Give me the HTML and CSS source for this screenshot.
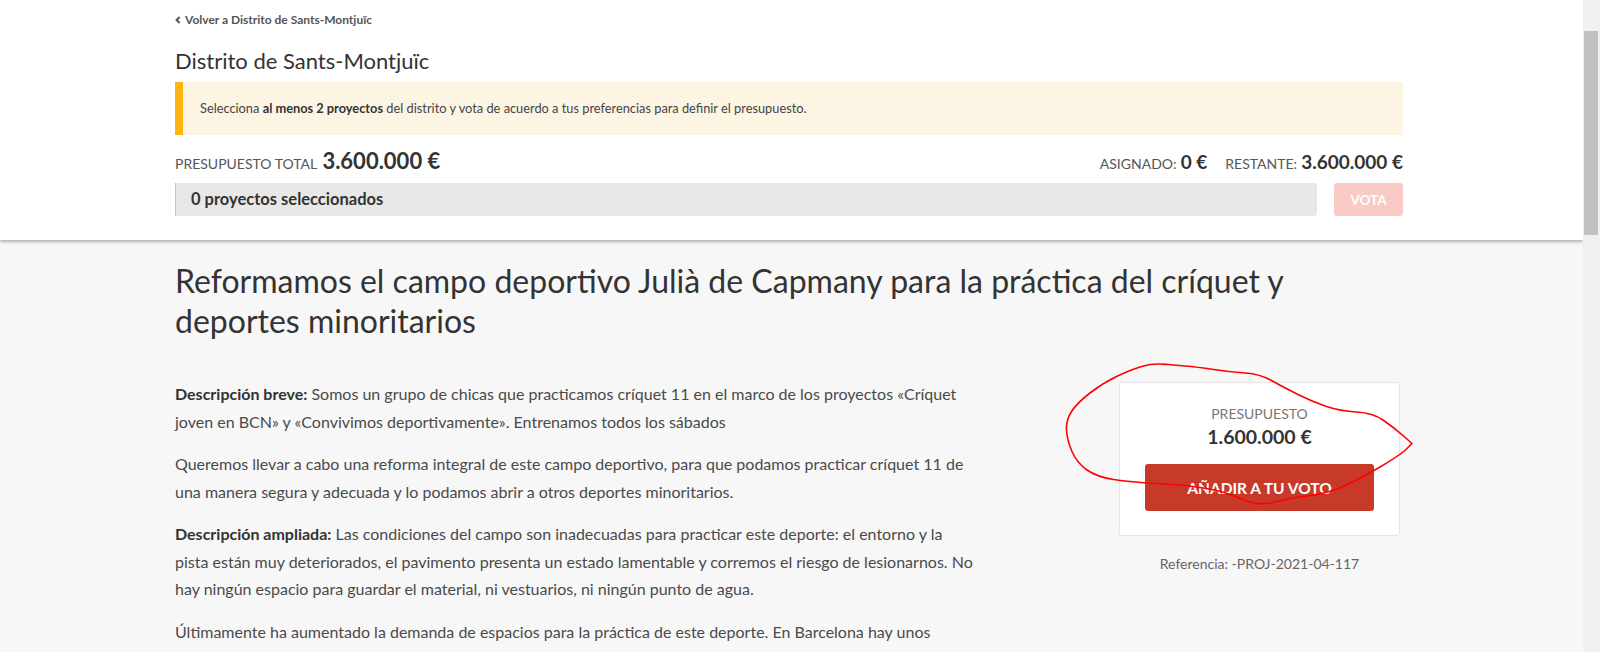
FILE: index.html
```html
<!DOCTYPE html>
<html lang="es">
<head>
    <meta charset="UTF-8">
    <meta name="viewport" content="width=device-width, initial-scale=1.0">
    <title>Reformamos el campo deportivo Julià de Capmany</title>
    <link rel="stylesheet" href="styles.css">
</head>
<body>

<div class="viewport">
    <div class="page">

        <!-- Budget header: district, instructions and vote summary -->
        <header class="budget-header">
            <div class="wrap">
                <a class="back-link" href="#">
                    <svg width="6" height="8" viewBox="0 0 6 8"><polyline points="4.6,1 1.6,4 4.6,7" fill="none" stroke="currentColor" stroke-width="2"/></svg>
                    Volver a Distrito de Sants-Montjuïc
                </a>
                <h2 class="district-title">Distrito de Sants-Montjuïc</h2>
                <div class="callout">
                    Selecciona <strong>al menos 2 proyectos</strong> del distrito y vota de acuerdo a tus preferencias para definir el presupuesto.
                </div>
                <div class="budget-summary">
                    <div class="budget-total">
                        <span class="label">Presupuesto total</span>
                        <strong class="amount-lg">3.600.000 €</strong>
                    </div>
                    <div class="budget-status">
                        <span><span class="label">Asignado:</span> <strong>0 €</strong></span>
                        <span><span class="label">Restante:</span> <strong>3.600.000 €</strong></span>
                    </div>
                </div>
                <div class="progress-row">
                    <div class="progress-bar">0 proyectos seleccionados</div>
                    <button class="vote-btn" disabled>Vota</button>
                </div>
            </div>
        </header>

        <!-- Project detail -->
        <main class="wrap project">
            <h1 class="project-title">Reformamos el campo deportivo Julià de Capmany para la práctica del críquet y<br>deportes minoritarios</h1>

            <div class="project-body">
                <div class="project-text">
                    <p><strong>Descripción breve:</strong> Somos un grupo de chicas que practicamos críquet 11 en el marco de los proyectos «Críquet<br>joven en BCN» y «Convivimos deportivamente». Entrenamos todos los sábados</p>
                    <p>Queremos llevar a cabo una reforma integral de este campo deportivo, para que podamos practicar críquet 11 de<br>una manera segura y adecuada y lo podamos abrir a otros deportes minoritarios.</p>
                    <p><strong>Descripción ampliada:</strong> Las condiciones del campo son inadecuadas para practicar este deporte: el entorno y la<br>pista están muy deteriorados, el pavimento presenta un estado lamentable y corremos el riesgo de lesionarnos. No<br>hay ningún espacio para guardar el material, ni vestuarios, ni ningún punto de agua.</p>
                    <p>Últimamente ha aumentado la demanda de espacios para la práctica de este deporte. En Barcelona hay unos</p>
                </div>

                <aside class="project-side">
                    <div class="budget-card">
                        <div class="card-label">Presupuesto</div>
                        <div class="card-amount">1.600.000 €</div>
                        <button class="add-btn">Añadir a tu voto</button>
                    </div>
                    <p class="reference">Referencia: -PROJ-2021-04-117</p>
                </aside>
            </div>
        </main>

        <!-- hand-drawn marker around the budget card -->
        <svg class="scribble" width="370" height="160" viewBox="0 0 370 160">
            <path fill="none" stroke="#f00" stroke-width="1.6" stroke-linejoin="round" stroke-linecap="round"
                d="M108,9 Q118,10 130,11 Q142,12 158.5,14.5 Q175,17 190,18 Q205,19 216.5,25.5 Q228,32 243,39.5 Q258,47 271.5,51.5 Q285,56 301.5,57 Q318,58 328,65 Q338,72 348,80.5 L357,88.5 L350,95.5 Q342,102 325,112 Q308,122 291.5,130 Q275,138 255,140.5 Q235,143 220,147 Q205,151 193.5,146.5 Q182,142 172,138.5 Q162,135 145,132.5 Q128,130 101.5,128.5 Q75,127 58.5,124.5 Q42,122 32,115 Q22,108 17,96.5 Q12,85 11.5,75 Q11,65 16.5,56.5 Q22,48 35,38 Q48,28 61.5,21.5 Q75,15 86.5,11.5 Q98,8 112,9.5"/>
        </svg>
    </div>

    <div class="scrollbar"><div class="scrollbar-thumb"></div></div>
</div>

</body>
</html>
```

FILE: styles.css
```css
html, body {
    margin: 0;
    padding: 0;
    height: 652px;
    overflow: hidden;
}

body {
    font-family: Lato, "Liberation Sans", sans-serif;
    color: #444;
    background-color: #f7f7f7;
}

.viewport {
    display: flex;
    height: 100%;
}

.page {
    flex: 1;
    position: relative;
    overflow: hidden;
}

.wrap {
    max-width: 1228px;
    margin-left: 175px;
}

/* ---------- header ---------- */

.budget-header {
    background-color: #fff;
    padding: 8px 0 24px;
    box-shadow: 0 2px 3px rgba(0, 0, 0, 0.28);
    position: relative;
    z-index: 1;
}

.back-link {
    display: inline-flex;
    align-items: center;
    gap: 4px;
    font-size: 12px;
    line-height: 16px;
    font-weight: 700;
    color: #555;
    text-decoration: none;
}

.district-title {
    margin: 20px 0 8px;
    font-size: 22px;
    line-height: 26px;
    font-weight: 400;
    color: #333;
}

.callout {
    background-color: #fdf5e4;
    border-left: 8px solid #ffb30f;
    padding: 18px 17px;
    font-size: 12.8px;
    line-height: 17px;
    color: #444;
}

.callout strong {
    color: #333;
}

.budget-summary {
    display: flex;
    justify-content: space-between;
    align-items: baseline;
    margin-top: 14px;
    height: 24px;
    line-height: 24px;
}

.label {
    text-transform: uppercase;
    font-size: 14px;
    color: #555;
}

.amount-lg {
    font-size: 22px;
    color: #333;
    margin-left: 1px;
}

.budget-status {
    display: flex;
    gap: 18px;
}

.budget-status strong {
    font-size: 19px;
    color: #333;
}

.progress-row {
    display: flex;
    gap: 17px;
    margin-top: 10px;
}

.progress-bar {
    flex: 1;
    height: 33px;
    line-height: 33px;
    background-color: #e8e8e8;
    border-left: 1px solid #f6b6ae;
    border-radius: 0 3px 3px 0;
    padding-left: 15px;
    font-size: 16.5px;
    font-weight: 700;
    color: #333;
}

.vote-btn {
    width: 69px;
    height: 33px;
    border: none;
    border-radius: 3px;
    background-color: #f9cbc4;
    color: #fff;
    font-family: inherit;
    font-size: 13.5px;
    font-weight: 700;
    text-transform: uppercase;
}

/* ---------- project ---------- */

.project-title {
    margin: 21px 0 39px;
    font-size: 32px;
    line-height: 40px;
    font-weight: 400;
    color: #333;
}

.project-body {
    display: grid;
    grid-template-columns: 1fr 281px;
    column-gap: 40px;
    padding-right: 3px;
}

.project-text p {
    margin: 0 0 15px;
    font-size: 16px;
    line-height: 27.5px;
    color: #4a4a4a;
}

.project-text strong {
    color: #333;
}

.project-side {
    margin-top: 2px;
}

.budget-card {
    background-color: #fff;
    border: 1px solid #e6e6e6;
    border-radius: 3px;
    padding: 21px 25px 24px;
    text-align: center;
}

.card-label {
    font-size: 14px;
    line-height: 20px;
    text-transform: uppercase;
    color: #777;
}

.card-amount {
    font-size: 19.5px;
    line-height: 26px;
    font-weight: 700;
    color: #333;
}

.add-btn {
    display: block;
    width: 100%;
    height: 47px;
    margin-top: 14px;
    border: none;
    border-radius: 3px;
    background-color: #c73a2a;
    color: #fff;
    font-family: inherit;
    font-size: 15.5px;
    font-weight: 700;
    text-transform: uppercase;
}

.reference {
    margin: 19px 0 0;
    text-align: center;
    font-size: 14px;
    color: #666;
}

.scribble {
    position: absolute;
    left: 1055px;
    top: 355px;
    z-index: 2;
    pointer-events: none;
}

/* ---------- scrollbar ---------- */

.scrollbar {
    width: 17px;
    background-color: #f1f1f1;
    padding-top: 31px;
}

.scrollbar-thumb {
    height: 204px;
    margin: 0 2px 0 1px;
    background-color: #c1c1c1;
}
```
